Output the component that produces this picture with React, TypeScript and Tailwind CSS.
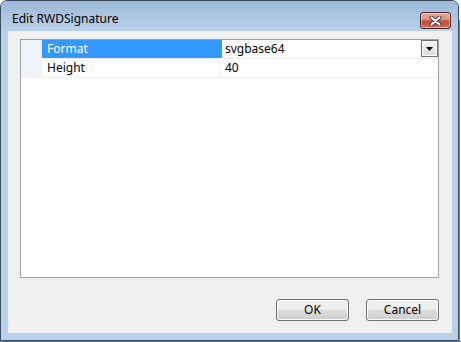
import React from "react";

function CloseGlyph() {
  return (
    <svg width="13" height="10" viewBox="0 0 13 10">
      <path d="M2.5 1.5 L10.5 8.5 M10.5 1.5 L2.5 8.5" stroke="#4a2f35" strokeWidth="4" strokeLinecap="round" fill="none" />
      <path d="M2.5 1.5 L10.5 8.5 M10.5 1.5 L2.5 8.5" stroke="#ffffff" strokeWidth="2.2" strokeLinecap="round" fill="none" />
    </svg>
  );
}

function Btn({ label }: { label: string }) {
  return (
    <div className="w-[73px] h-[22px] rounded-[3px] border border-[#707070] shadow-[inset_0_0_0_1px_#fbfbfb] bg-[linear-gradient(to_bottom,#f2f2f2_0%,#ebebeb_50%,#dddddd_50%,#cfcfcf_100%)] flex items-center justify-center text-[12px] leading-[16px] text-black">
      {label}
    </div>
  );
}

export default function App() {
  return (
    <div className="w-[461px] h-[342px] bg-white overflow-hidden font-['Noto_Sans',sans-serif] flex flex-col">
      <div className="flex h-[341px]">
        <div className="w-[459px] h-[341px] rounded-t-[7px] border border-[#3b4b5e] bg-[#b9d1ea] flex flex-col">
          <div className="h-[30px] rounded-t-[6px] bg-[linear-gradient(to_bottom,#9db8d6_0%,#acc6e1_50%,#b9d1ea_100%)] flex items-start justify-between">
            <div className="pl-[11px] pt-[10px] text-[12px] leading-[16px] text-black">Edit RWDSignature</div>
            <div className="mt-[11px] mr-[7px] w-[31px] h-[17px] rounded-[3px] border border-[#4a2630] bg-[linear-gradient(to_bottom,#e9aa9b_0%,#dc8f7d_45%,#c4503a_52%,#c75a42_80%,#d9806a_100%)] shadow-[inset_0_0_0_1px_rgba(255,220,210,0.5)] flex items-center justify-center">
              <CloseGlyph />
            </div>
          </div>
          <div className="ml-[7px] mr-[6px] h-[302px] bg-[#f0f0f0] flex flex-col pt-[8px] pl-[12px] pr-[13px]">
            <div className="h-[239px] bg-white border border-[#a0a0a0] flex flex-col text-[12px] leading-[18px] text-black">
              <div className="flex h-[19px] border-b border-[#f0f0f0]">
                <div className="w-[21px] h-[19px] -mb-px bg-[#eef3fa]" />
                <div className="w-[180px] bg-[#3399ff] text-white pl-[5px]">Format</div>
                <div className="flex-1 flex justify-between pl-[3px]">
                  <span>svgbase64</span>
                  <div className="w-[17px] h-[17px] border border-[#6f6f6f] shadow-[inset_0_0_0_1px_#ffffff] bg-[linear-gradient(to_bottom,#f3f3f3,#dcdcdc)] flex items-center justify-center">
                    <svg width="7" height="4" viewBox="0 0 7 4">
                      <polygon points="0,0 7,0 3.5,4" fill="#000" />
                    </svg>
                  </div>
                </div>
              </div>
              <div className="flex h-[19px] border-b border-[#f0f0f0]">
                <div className="w-[21px] bg-[#eef3fa]" />
                <div className="w-[179px] pl-[5px] border-r border-[#f0f0f0]">Height</div>
                <div className="flex-1 pl-[4px]">40</div>
              </div>
            </div>
            <div className="mt-[21px] flex justify-end gap-[17px]">
              <Btn label="OK" />
              <Btn label="Cancel" />
            </div>
          </div>
        </div>
        <div className="flex-1 flex justify-start">
          <div className="w-[1px] ml-[0px] mt-[20px] bg-[#8a8a8a]" />
        </div>
      </div>
      <div className="h-[1px] bg-[#2a8a8a]" />
    </div>
  );
}
